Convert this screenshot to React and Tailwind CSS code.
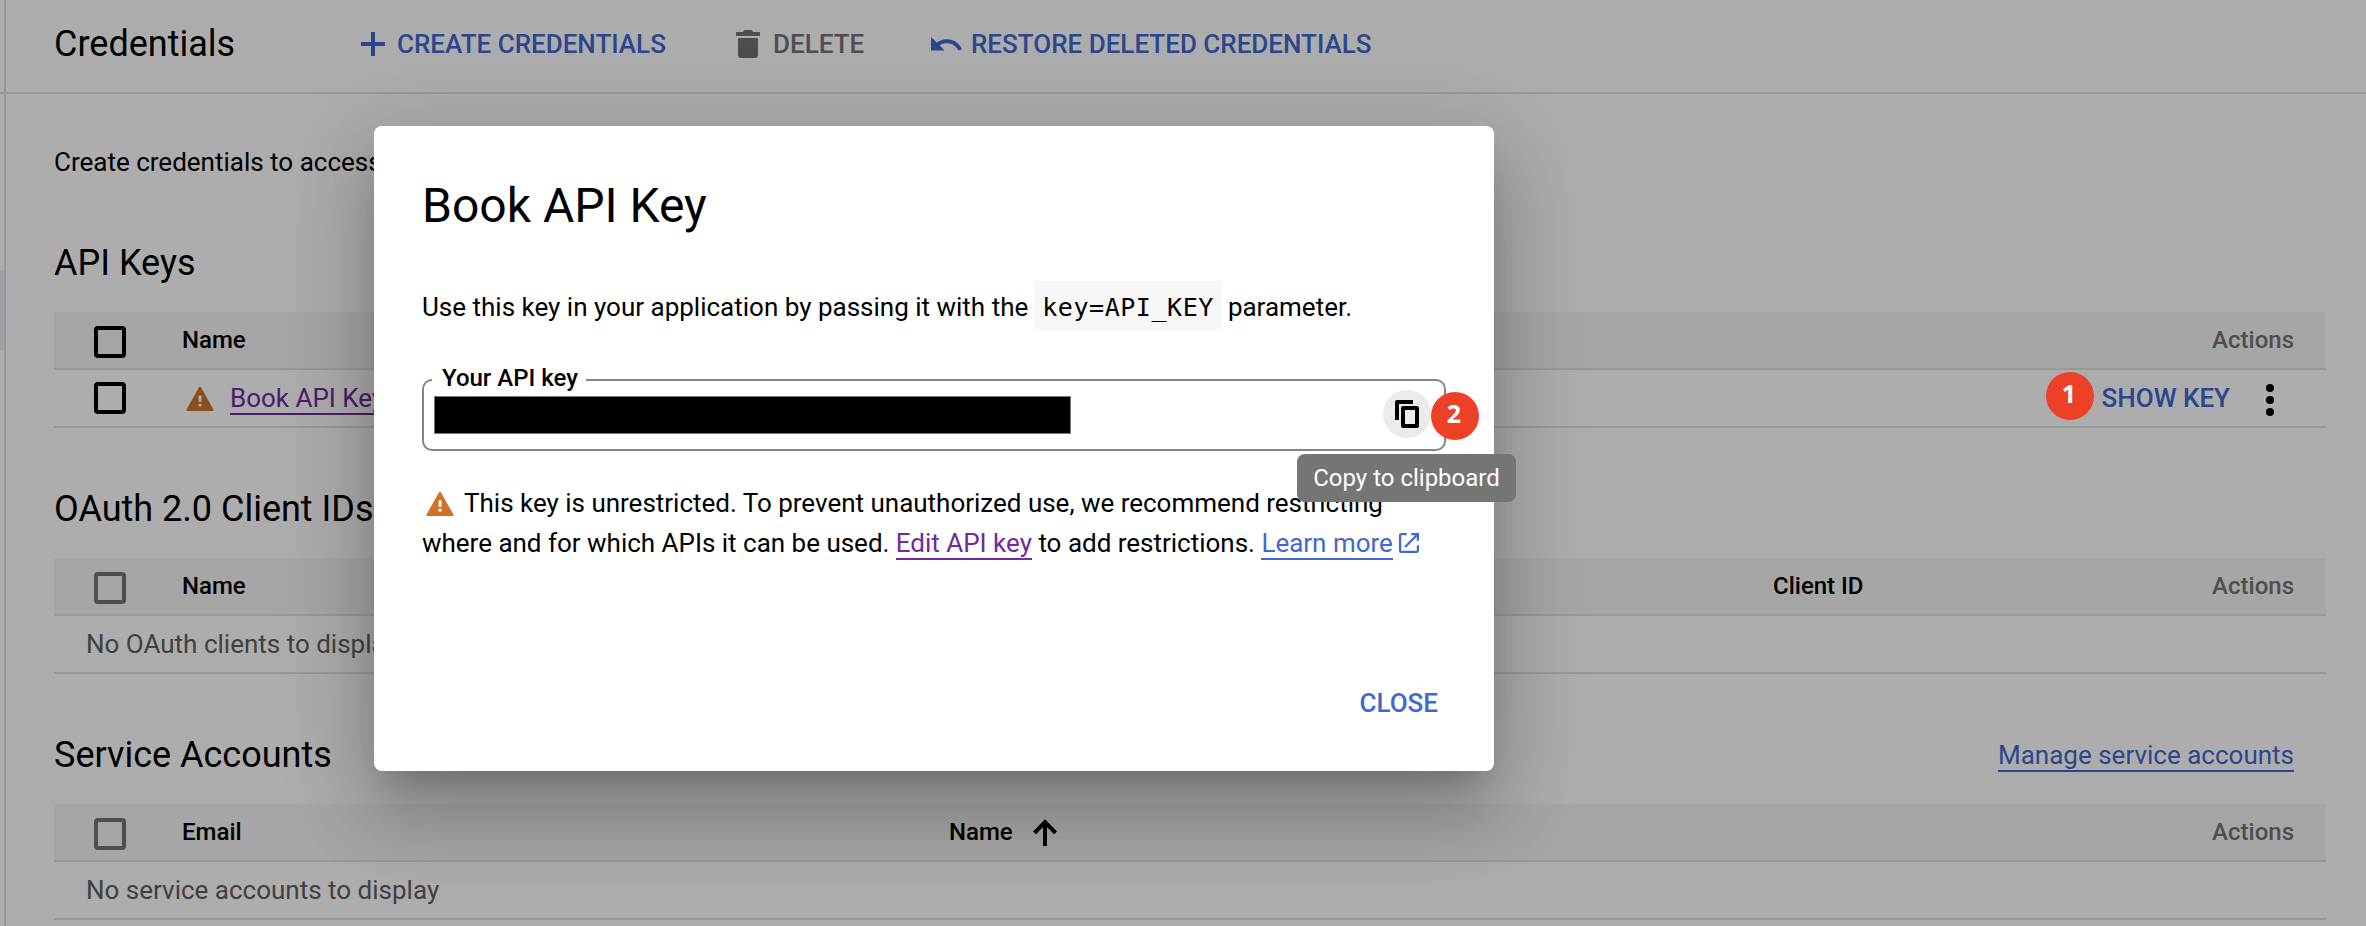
function Warning({ className }) {
  return (
    <svg viewBox="0 0 28 25" className={className} aria-hidden="true">
      <path d="M14 1.500 26.700 24H1.300Z" fill="#d0722a" stroke="#d0722a" strokeWidth="1.800" strokeLinejoin="round" />
      <path d="M12.600 9.500h2.900v6.300h-2.900zM12.600 17.700h2.900v2.700h-2.900z" fill="#fff" />
    </svg>
  );
}

function Checkbox({ disabled }) {
  return (
    <span
      className={
        disabled
          ? "size-8 shrink-0 rounded-[4px] border-4 border-[#737373]"
          : "size-8 shrink-0 rounded-[4px] border-4 border-black"
      }
    />
  );
}

function Section({ title, link, disabled, columns, children }) {
  return (
    <section className="flex h-[246px] flex-col">
      <div className="flex h-[98px] items-end justify-between pr-8">
        <h2 className="h-[70px] text-[36px] leading-[42px]">{title}</h2>
        {link && (
          <a className="mb-8 border-b-2 border-[#3f69d1] text-[26px] leading-[30px] text-[#3f69d1]">{link}</a>
        )}
      </div>
      <div className="flex h-[58px] items-center border-b-2 border-[#e0e0e0] bg-[#f5f5f5] pr-8 pl-10 text-[24px] font-medium">
        <div className="flex w-[88px] pt-1">
          <Checkbox disabled={disabled} />
        </div>
        {columns}
        <div className="ml-auto text-[#737373]">Actions</div>
      </div>
      <div className="flex h-[58px] items-center border-b-2 border-[#e0e0e0] text-[26px]">{children}</div>
    </section>
  );
}

function Badge({ children }) {
  return (
    <span className="flex size-12 items-center justify-center rounded-full bg-[#ec4127] pr-0.5 pb-1 font-[Open_Sans] text-[25px] font-bold text-white">
      {children}
    </span>
  );
}

export default function App() {
  return (
    <div className="relative flex h-[926px] w-[2366px] overflow-hidden bg-white font-[Roboto,sans-serif] text-black">
      <aside className="w-1.5 shrink-0 border-r-2 border-[#e0e0e0]">
        <div className="h-[92px] w-1" />
        <div className="h-0.5 w-1 bg-[#e0e0e0]" />
        <div className="mt-[176px] h-20 w-1 bg-[#e8eaf6]" />
      </aside>
      <main className="flex grow flex-col">
        <header className="flex h-[94px] shrink-0 items-center border-b-2 border-[#e0e0e0] pb-1 pl-12 text-[26px] font-medium text-[#3f69d1]">
          <h1 className="w-[301px] text-[36px] font-normal text-black">Credentials</h1>
          <div className="flex w-[378px] items-center">
            <svg viewBox="0 0 24 24" fill="currentColor" className="mr-3 ml-1.5 size-6" aria-hidden="true">
              <path d="M0 10h10V0h4v10h10v4H14v10h-4V14H0z" />
            </svg>
            CREATE CREDENTIALS
          </div>
          <div className="flex w-[196px] items-center text-[#737373]">
            <svg viewBox="0 0 24 28" fill="currentColor" className="mr-[13px] ml-[3px] h-7 w-6" aria-hidden="true">
              <path d="M0 2h7l1.500-2h7L17 2h7v4H0zM2 8h20v16.500a3.500 3.500 0 0 1-3.500 3.500h-13a3.500 3.500 0 0 1-3.500-3.500z" />
            </svg>
            DELETE
          </div>
          <div className="flex items-center">
            <svg viewBox="0 0 31 14" fill="currentColor" className="mr-[9px] ml-0.5 h-3.5 w-[31px]" aria-hidden="true">
              <path d="M0 0v13.500h13.500L8.600 8.300A13 13 0 0 1 27.500 13.500L31 12.300A16.500 16.500 0 0 0 5.800 5.600z" />
            </svg>
            RESTORE DELETED CREDENTIALS
          </div>
        </header>
        <div className="pr-10 pl-12">
          <p className="h-[120px] pt-[52px] text-[26px] leading-8">
            Create credentials to access your enabled APIs
          </p>
          <Section title="API Keys" columns={<div>Name</div>}>
            <div className="flex w-[88px] shrink-0 pl-10">
              <Checkbox />
            </div>
            <Warning className="mt-px ml-[44px] h-[25px] w-7" />
            <a className="mt-0.5 ml-4 border-b-2 border-[#72289f] leading-[30px] text-[#72289f]">Book API Key</a>
            <span className="ml-auto font-medium text-[#3f69d1]">SHOW KEY</span>
            <svg viewBox="0 0 8 32" className="mt-1 mr-[52px] ml-9 h-8 w-2" aria-hidden="true">
              <circle cx="4" cy="4" r="4" />
              <circle cx="4" cy="16" r="4" />
              <circle cx="4" cy="28" r="4" />
            </svg>
          </Section>
          <Section
            title="OAuth 2.0 Client IDs"
            disabled
            columns={
              <>
                <div className="w-[1591px]">Name</div>
                <div>Client ID</div>
              </>
            }
          >
            <span className="pl-8 text-[#5f5f5f]">No OAuth clients to display</span>
          </Section>
          <Section
            title="Service Accounts"
            link="Manage service accounts"
            disabled
            columns={
              <>
                <div className="w-[767px]">Email</div>
                <div>Name</div>
                <svg viewBox="0 0 24 27" fill="none" stroke="currentColor" strokeWidth="4" className="mt-px ml-5 h-[27px] w-6" aria-hidden="true">
                  <path d="M12 27V3M1.500 13.800 12 3l10.500 10.800" />
                </svg>
              </>
            }
          >
            <span className="pl-8 text-[#5f5f5f]">No service accounts to display</span>
          </Section>
        </div>
      </main>

      <div className="absolute inset-0 bg-black/32" />

      <div
        role="dialog"
        className="absolute top-[126px] left-[374px] flex h-[645px] w-[1120px] flex-col rounded-lg bg-white px-12 text-[26px] leading-10 shadow-[0_22px_30px_-14px_rgba(0,0,0,0.2),0_48px_76px_6px_rgba(0,0,0,0.14),0_18px_92px_16px_rgba(0,0,0,0.12)]"
      >
        <h2 className="mt-[47px] text-[48px] leading-[65px]">Book API Key</h2>
        <p className="mt-[43px] flex h-[50px] items-center pt-0.5">
          Use this key in your application by passing it with the
          <code className="mx-1.5 -mt-0.5 h-[50px] bg-[#f7f7f7] px-2 font-['DejaVu_Sans_Mono',monospace] text-[25px] leading-[53px] tracking-[0.55px]">
            key=API_KEY
          </code>
          parameter.
        </p>
        <fieldset className="mt-[37px] flex h-[83px] w-[1024px] flex-col rounded-[10px] border-2 border-[#80868b] pr-[13px] pl-2">
          <legend className="h-6 w-[154px] pl-2.5 text-[24px] leading-5 font-medium whitespace-nowrap">Your API key</legend>
          <div className="flex items-start">
            <div className="mt-1 ml-0.5 h-[38px] w-[637px] border border-[#777] bg-black" />
            <button className="-mt-0.5 ml-auto flex size-12 items-center justify-center rounded-full bg-[#ebebeb]">
              <svg viewBox="0 0 24 28" fill="none" stroke="#000" strokeWidth="4" strokeLinejoin="round" className="h-7 w-6" aria-hidden="true">
                <path d="M2 20V2h16M8 8h14v18H8z" />
              </svg>
            </button>
          </div>
        </fieldset>
        <p className="mt-8 tracking-[-0.01px]">
          <Warning className="mr-2.5 ml-1 inline-block h-[25px] w-7 align-[-4px]" />
          This key is unrestricted. To prevent unauthorized use, we recommend restricting
          <br />
          where and for which APIs it can be used.{" "}
          <a className="border-b-2 border-[#72289f] text-[#72289f]">Edit API key</a> to add restrictions.{" "}
          <a className="border-b-2 border-[#3f69d1] text-[#3f69d1]">Learn more</a>
          <svg viewBox="0 0 18 18" fill="#3f69d1" className="ml-1.5 inline-block size-5 align-[-1px]" aria-hidden="true">
            <path d="M16 16H2V2h5V0H2a2 2 0 0 0-2 2v14a2 2 0 0 0 2 2h14c1.100 0 2-.9 2-2v-5h-2v5zM11 0v2h3.590l-9.830 9.830 1.410 1.410L16 3.410V7h2V0h-7z" />
          </svg>
        </p>
        <button className="mt-[120px] mr-2 self-end font-medium text-[#3f69d1]">CLOSE</button>
      </div>

      <div className="absolute top-[372px] left-[2046px]">
        <Badge>1</Badge>
      </div>
      <div className="absolute top-[392px] left-[1431px]">
        <Badge>2</Badge>
      </div>
      <div className="absolute top-[454px] left-[1297px] flex h-12 w-[219px] items-center justify-center rounded-lg bg-[#757575] text-[24px] text-white">
        Copy to clipboard
      </div>
    </div>
  );
}
